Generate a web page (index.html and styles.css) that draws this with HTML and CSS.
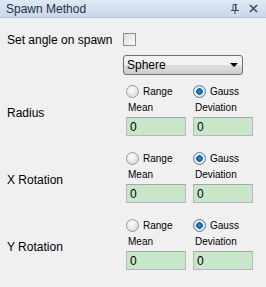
FILE: index.html
```html
<!DOCTYPE html>
<html lang="en">
<head>
    <meta charset="UTF-8">
    <meta name="viewport" content="width=device-width, initial-scale=1.0">
    <title>Spawn Method</title>
    <link rel="stylesheet" href="styles.css">
</head>
<body>
    <div class="panel">
        <div class="titlebar">
            <span class="title">Spawn Method</span>
            <div class="title-buttons">
                <svg class="pin" width="8" height="10" viewBox="0 0 8 10">
                    <path d="M2 0.5h4M2 1v5M5 1v5M0 6.5h8M4 7v3" stroke="#3b4a5c" stroke-width="1" fill="none"/>
                    <rect x="4" y="1" width="1" height="5" fill="#3b4a5c"/>
                </svg>
                <svg class="close" width="9" height="9" viewBox="0 0 9 9">
                    <path d="M1 1L8 8M8 1L1 8" stroke="#3b4a5c" stroke-width="1.6" fill="none"/>
                </svg>
            </div>
        </div>

        <div class="content">
            <div class="check-row">
                <span class="label-main">Set angle on spawn</span>
                <span class="checkbox"></span>
            </div>

            <div class="select-row">
                <div class="select">
                    <span>Sphere</span>
                    <span class="arrow"></span>
                </div>
            </div>

            <div class="param">
                <div class="param-name">Radius</div>
                <div class="param-controls">
                    <label class="radio"><span class="dot"></span>Range</label>
                    <label class="radio"><span class="dot checked"></span>Gauss</label>
                    <div class="caption">Mean</div>
                    <div class="caption">Deviation</div>
                    <div class="field">0</div>
                    <div class="field">0</div>
                </div>
            </div>

            <div class="param">
                <div class="param-name">X Rotation</div>
                <div class="param-controls">
                    <label class="radio"><span class="dot"></span>Range</label>
                    <label class="radio"><span class="dot checked"></span>Gauss</label>
                    <div class="caption">Mean</div>
                    <div class="caption">Deviation</div>
                    <div class="field">0</div>
                    <div class="field">0</div>
                </div>
            </div>

            <div class="param">
                <div class="param-name">Y Rotation</div>
                <div class="param-controls">
                    <label class="radio"><span class="dot"></span>Range</label>
                    <label class="radio"><span class="dot checked"></span>Gauss</label>
                    <div class="caption">Mean</div>
                    <div class="caption">Deviation</div>
                    <div class="field">0</div>
                    <div class="field">0</div>
                </div>
            </div>
        </div>
    </div>
</body>
</html>
```

FILE: styles.css
```css
body {
    margin: 0;
    background-color: #f0f0f0;
    font-family: "Liberation Sans", Arial, sans-serif;
    color: #000;
}

.panel {
    width: 266px;
    height: 287px;
}

.titlebar {
    height: 18px;
    display: flex;
    align-items: center;
    justify-content: space-between;
    padding: 0 8px 0 6px;
    background: linear-gradient(#dfe9f5, #c8d7ea);
    border-bottom: 1px solid #b9c9dc;
    box-sizing: border-box;
}

.title {
    font-size: 12px;
    color: #1e2f45;
}

.title-buttons {
    display: flex;
    align-items: center;
    gap: 10px;
}

.content {
    padding: 15px 0 0 7px;
}

.check-row {
    display: flex;
    align-items: center;
    height: 13px;
}

.label-main {
    font-size: 12px;
    width: 116px;
}

.checkbox {
    width: 11px;
    height: 11px;
    border: 1px solid #8e8f8f;
    background: linear-gradient(135deg, #dcdcdc, #fbfbfb);
}

.select-row {
    padding: 9px 0 0 116px;
}

.select {
    width: 120px;
    height: 20px;
    box-sizing: border-box;
    border: 1px solid #707070;
    border-radius: 3px;
    background: linear-gradient(#f2f2f2 50%, #dddddd 50%, #cfcfcf);
    display: flex;
    align-items: center;
    justify-content: space-between;
    padding: 0 4px 0 3px;
    font-size: 12px;
}

.arrow {
    width: 0;
    height: 0;
    border-left: 4px solid transparent;
    border-right: 4px solid transparent;
    border-top: 4px solid #000;
}

.param {
    display: flex;
    margin-top: 9px;
}

.param + .param {
    margin-top: 15px;
}

.param-name {
    width: 119px;
    font-size: 12px;
    padding-top: 6px;
    align-self: center;
}

.param-controls {
    display: grid;
    grid-template-columns: 67px 60px;
    grid-template-rows: 15px 18px 19px;
}

.radio {
    display: flex;
    align-items: center;
    font-size: 10px;
    gap: 4px;
}

.dot {
    width: 11px;
    height: 11px;
    border-radius: 50%;
    border: 1px solid #989898;
    background: radial-gradient(circle at 40% 35%, #fdfdfd, #d3d3d3);
    box-sizing: content-box;
}

.dot.checked {
    background: radial-gradient(circle, #2d97d6 0, #0a5a9c 3px, #e8eef2 3.5px, #cfd6dc);
    border-color: #5a7ea0;
}

.caption {
    font-size: 10px;
    padding: 3px 0 0 2px;
}

.field {
    width: 60px;
    height: 19px;
    box-sizing: border-box;
    border: 1px solid #b5b9bf;
    border-top-color: #a3a7ad;
    background-color: #c8e6c8;
    font-size: 12px;
    padding: 2px 0 0 3px;
}
```
